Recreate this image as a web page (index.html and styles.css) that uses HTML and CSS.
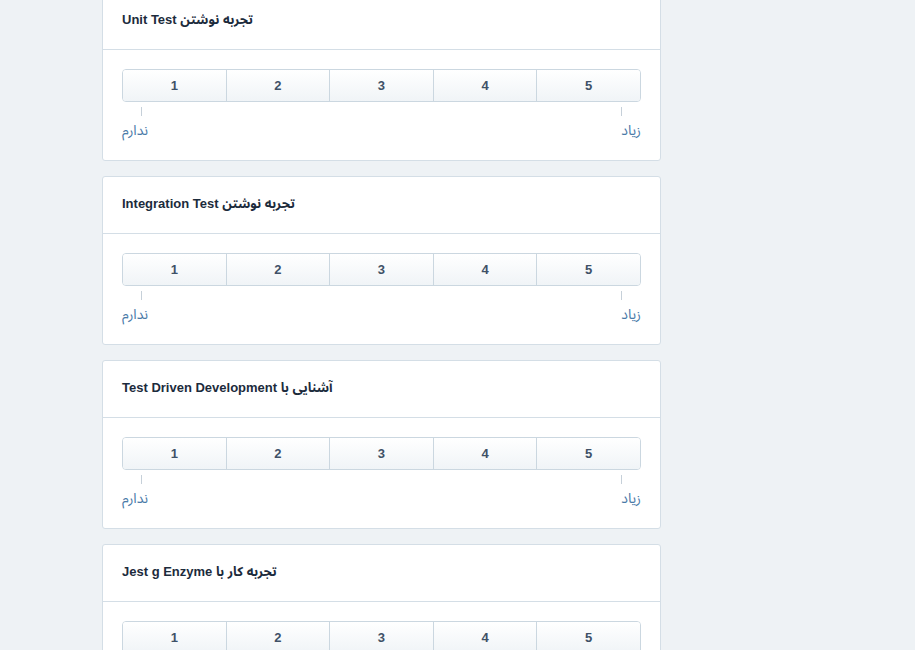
FILE: index.html
```html
<!DOCTYPE html>
<html lang="fa">
<head>
<meta charset="utf-8">
<link rel="stylesheet" href="styles.css">
</head>
<body>
<div class="page">
  <div class="card">
    <div class="card-header"><span class="title" dir="rtl">تجربه نوشتن Unit Test</span></div>
    <div class="card-body">
      <div class="scale"><div class="opt">1</div><div class="opt">2</div><div class="opt">3</div><div class="opt">4</div><div class="opt">5</div></div>
      <div class="ticks"><span class="tick"></span><span class="tick"></span></div>
      <div class="labels"><span class="lbl">ندارم</span><span class="lbl">زیاد</span></div>
    </div>
  </div>
  <div class="card">
    <div class="card-header"><span class="title" dir="rtl">تجربه نوشتن Integration Test</span></div>
    <div class="card-body">
      <div class="scale"><div class="opt">1</div><div class="opt">2</div><div class="opt">3</div><div class="opt">4</div><div class="opt">5</div></div>
      <div class="ticks"><span class="tick"></span><span class="tick"></span></div>
      <div class="labels"><span class="lbl">ندارم</span><span class="lbl">زیاد</span></div>
    </div>
  </div>
  <div class="card">
    <div class="card-header"><span class="title" dir="rtl">آشنایی با Test Driven Development</span></div>
    <div class="card-body">
      <div class="scale"><div class="opt">1</div><div class="opt">2</div><div class="opt">3</div><div class="opt">4</div><div class="opt">5</div></div>
      <div class="ticks"><span class="tick"></span><span class="tick"></span></div>
      <div class="labels"><span class="lbl">ندارم</span><span class="lbl">زیاد</span></div>
    </div>
  </div>
  <div class="card">
    <div class="card-header"><span class="title" dir="rtl">تجربه کار با Jest g Enzyme</span></div>
    <div class="card-body">
      <div class="scale"><div class="opt">1</div><div class="opt">2</div><div class="opt">3</div><div class="opt">4</div><div class="opt">5</div></div>
      <div class="ticks"><span class="tick"></span><span class="tick"></span></div>
      <div class="labels"><span class="lbl">ندارم</span><span class="lbl">زیاد</span></div>
    </div>
  </div>
</div>
</body>
</html>
```
FILE: styles.css
```css
html, body {
  margin: 0;
  padding: 0;
  background: #eef2f5;
  font-family: "Liberation Sans", "Noto Sans Arabic", "Noto Sans Arabic UI", "DejaVu Sans", Arial, sans-serif;
  overflow: hidden;
}
.page {
  margin-top: -8px;
  margin-left: 102px;
  width: 559px;
  display: flex;
  flex-direction: column;
  gap: 15px;
}
.card {
  background: #fff;
  border: 1px solid #d4dee6;
  border-radius: 3px;
}
.card-header {
  height: 57px;
  box-sizing: border-box;
  padding: 0 19px 2px;
  border-bottom: 1px solid #d4dee6;
  display: flex;
  align-items: center;
}
.title {
  font-size: 13px;
  font-weight: bold;
  color: #1c2b3c;
  text-align: left;
}
.card-body {
  height: 110px;
  box-sizing: border-box;
  padding: 19px 19px 0;
}
.scale {
  display: flex;
  height: 33px;
  box-sizing: border-box;
  border: 1px solid #cbd7e0;
  border-radius: 4px;
  overflow: hidden;
}
.opt {
  flex: 1;
  display: flex;
  align-items: center;
  justify-content: center;
  background: linear-gradient(#ffffff, #f0f4f7);
  font-size: 13px;
  font-weight: bold;
  color: #3f5167;
}
.opt + .opt {
  border-left: 1px solid #cbd7e0;
}
.ticks {
  display: flex;
  justify-content: space-between;
  padding: 5px 19px 0;
}
.tick {
  width: 1px;
  height: 9px;
  background: #c6d0d9;
}
.labels {
  display: flex;
  justify-content: space-between;
  margin-top: 0;
  font-size: 14px;
  color: #4a7aa8;
}
```
